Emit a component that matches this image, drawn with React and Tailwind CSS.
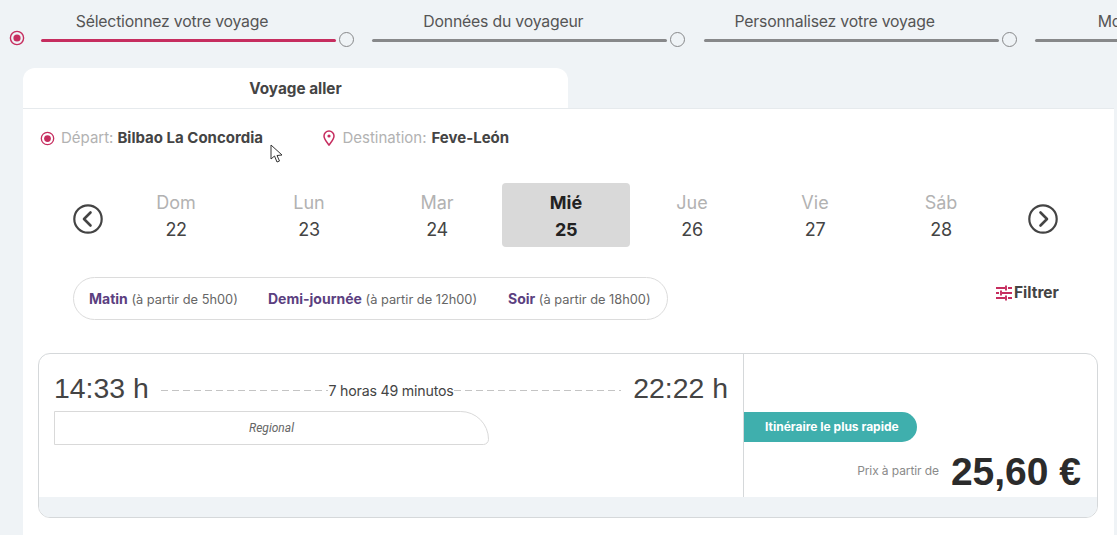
import React from "react";

const steps = [
  { label: "Sélectionnez votre voyage", active: true },
  { label: "Données du voyageur" },
  { label: "Personnalisez votre voyage" },
  { label: "Mode de paiement" },
];

const days = [
  { name: "Dom", num: "22" },
  { name: "Lun", num: "23" },
  { name: "Mar", num: "24" },
  { name: "Mié", num: "25", selected: true },
  { name: "Jue", num: "26" },
  { name: "Vie", num: "27" },
  { name: "Sáb", num: "28" },
];

const slots = [
  { name: "Matin", from: "(à partir de 5h00)", width: "w-[179px]" },
  { name: "Demi-journée", from: "(à partir de 12h00)", width: "w-[240px]" },
  { name: "Soir", from: "(à partir de 18h00)", width: "" },
];

const RadioIcon = ({ className }) => (
  <svg viewBox="0 0 16 16" className={className}>
    <circle cx="8" cy="8" r="6.6" fill="none" stroke="#c62d5f" strokeWidth="1.4" />
    <circle cx="8" cy="8" r="3.6" fill="#c62d5f" />
  </svg>
);

const Arrow = ({ dir }) => (
  <svg viewBox="0 0 30 30" className="w-[30px] h-[30px] mt-2 shrink-0">
    <circle cx="15" cy="15" r="13.7" fill="none" stroke="#444" strokeWidth="2.2" />
    <path
      d={dir === "left" ? "M17.5 8.5 L11 15 L17.5 21.5" : "M12.5 8.5 L19 15 L12.5 21.5"}
      fill="none"
      stroke="#444"
      strokeWidth="2.6"
      strokeLinecap="round"
      strokeLinejoin="round"
    />
  </svg>
);

const Dashes = () => (
  <div className="flex-1 h-px bg-[repeating-linear-gradient(90deg,#c4c4c4_0,#c4c4c4_7px,transparent_7px,transparent_11px)]"></div>
);

const App = () => {
  return (
    <div className="relative w-[1117px] h-[535px] overflow-hidden bg-[#eff3f6] font-['Inter',sans-serif] text-[#444]">
      {/* Stepper */}
      <div className="flex items-start h-[68px] pl-[9px]">
        <RadioIcon className="w-4 h-4 mt-[30px] mr-4 shrink-0" />
        {steps.map((step) => (
          <div key={step.label} className="flex items-start shrink-0 w-[331.33px]">
            <div className="w-[295px] shrink-0">
              <div className="h-[34px] pt-3 pr-[33px] text-center text-[15.8px] leading-[20px] tracking-[-0.2px] text-[#555] whitespace-nowrap">
                {step.label}
              </div>
              <div className={`h-[3px] mt-[5px] rounded-full ${step.active ? "bg-[#c62d5f]" : "bg-[#87888a]"}`}></div>
            </div>
            <div className="w-[15px] h-[15px] ml-[3px] mt-[32px] rounded-full border border-[#87888a] shrink-0"></div>
          </div>
        ))}
      </div>

      <div className="ml-[23px] w-[1091px]">
        {/* Tab */}
        <div className="w-[545px] h-10 pt-[2px] flex items-center justify-center bg-white rounded-t-xl text-[15.3px] font-bold">
          Voyage aller
        </div>

        <div className="bg-white border-t border-[#e6eaed] h-[427px] pl-[15px] pt-5">
          {/* Origin and destination */}
          <div className="flex items-center h-[18px] pl-[2px] text-[15px]">
            <RadioIcon className="w-[15px] h-[15px] mr-[6px] shrink-0" />
            <span className="text-[#b2b2b2]">Départ:</span>
            <span className="ml-1 font-bold w-[205px]">Bilbao La Concordia</span>
            <svg viewBox="0 0 14 16" className="w-[14px] h-4 mr-[6px] shrink-0">
              <path
                d="M7 15 C4.5 11.5 2 9 2 6 A5 5 0 0 1 12 6 C12 9 9.5 11.5 7 15 Z"
                fill="none"
                stroke="#c62d5f"
                strokeWidth="1.5"
              />
              <circle cx="7" cy="6" r="1.6" fill="#c62d5f" />
            </svg>
            <span className="text-[#b2b2b2]">Destination:</span>
            <span className="ml-[5px] font-bold">Feve-León</span>
          </div>

          {/* Calendar */}
          <div className="flex items-center mt-[36px] ml-[35px]">
            <Arrow dir="left" />
            <div className="grid grid-cols-[140px_126px_130px_128px_124px_122px_130px] ml-[3px] mr-[22px]">
              {days.map((day) => (
                <div
                  key={day.name}
                  className={`h-16 pt-[2px] flex flex-col items-center justify-center rounded ${day.selected ? "bg-[#d9d9d9] font-bold text-[#222]" : ""}`}
                >
                  <span className={`text-[18px] leading-[27px] ${day.selected ? "" : "text-[#b2b2b2]"}`}>{day.name}</span>
                  <span className="text-[18px] leading-[27px] tracking-[-0.4px]">{day.num}</span>
                </div>
              ))}
            </div>
            <Arrow dir="right" />
          </div>

          {/* Time of day filter */}
          <div className="flex items-start mt-[30px] ml-[35px]">
            <div className="w-[595px] h-[43px] flex items-center pl-[15px] bg-white border border-[#dcdcdc] rounded-full text-[12.8px] whitespace-nowrap">
              {slots.map((slot) => (
                <div key={slot.name} className={slot.width}>
                  <span className="font-bold text-[14px] text-[#5b4080]">{slot.name}</span>{" "}
                  <span className="text-[#666]">{slot.from}</span>
                </div>
              ))}
            </div>
            <div className="flex items-center ml-[328px] mt-[4px] text-[15.5px] font-bold">
              <svg viewBox="0 0 16 16" className="w-4 h-4 mr-[2px] shrink-0" stroke="#c62d5f" strokeWidth="1.9" fill="none">
                <path d="M0 3 H9 M12 3 H16 M10 0.5 V5.5 M0 8 H3 M6 8 H16 M5 5.5 V10.5 M0 13 H9 M12 13 H16 M10 10.5 V15.5" />
              </svg>
              Filtrer
            </div>
          </div>

          {/* Result card */}
          <div className="w-[1060px] h-[165px] mt-[33px] border border-[#d5d8da] rounded-xl overflow-hidden flex flex-col">
            <div className="flex flex-1">
              <div className="w-[705px] border-r border-[#d5d8da] pl-[15px] pr-[15px] pt-4">
                <div className="flex items-center h-9 font-['Liberation_Sans',sans-serif] text-[28.4px] text-[#444]">
                  <span>14:33 h</span>
                  <div className="flex-1 flex items-center mx-[12px] pt-[6px]">
                    <Dashes />
                    <span className="font-['Inter',sans-serif] text-[14.2px] tracking-[-0.2px]">7 horas 49 minutos</span>
                    <Dashes />
                  </div>
                  <span>22:22 h</span>
                </div>
                <div className="w-[435px] h-[34px] mt-[5px] flex items-center justify-center border border-[#d9d9d9] rounded-tr-[30px] rounded-br-[6px] italic text-[12px] text-[#666] font-['Roboto',sans-serif]">
                  Regional
                </div>
              </div>
              <div className="flex-1 flex flex-col pt-[58px]">
                <div className="w-[173px] h-[30px] flex items-center pl-[21px] bg-[#3fafad] rounded-r-full text-white text-[12px] font-bold">
                  Itinéraire le plus rapide
                </div>
                <div className="flex items-center justify-end pr-4 mt-[6px]">
                  <span className="text-[12px] text-[#8a8a8a] tracking-[-0.1px] mr-3 mb-[2px]">Prix à partir de</span>
                  <span className="font-['Liberation_Sans',sans-serif] font-bold text-[39px] leading-[48px] text-[#2b2b2b]">25,60 €</span>
                </div>
              </div>
            </div>
            <div className="h-5 bg-[#eff3f6]"></div>
          </div>
        </div>
      </div>

      {/* Mouse pointer */}
      <svg viewBox="0 0 14 20" className="absolute left-[270px] top-[144px] w-[14px] h-5">
        <path d="M1 1 V15 L4.5 12 L7 18 L9.5 17 L7 11.5 L12 11 Z" fill="#fff" stroke="#333" strokeWidth="1" />
      </svg>
    </div>
  );
};

export default App;
